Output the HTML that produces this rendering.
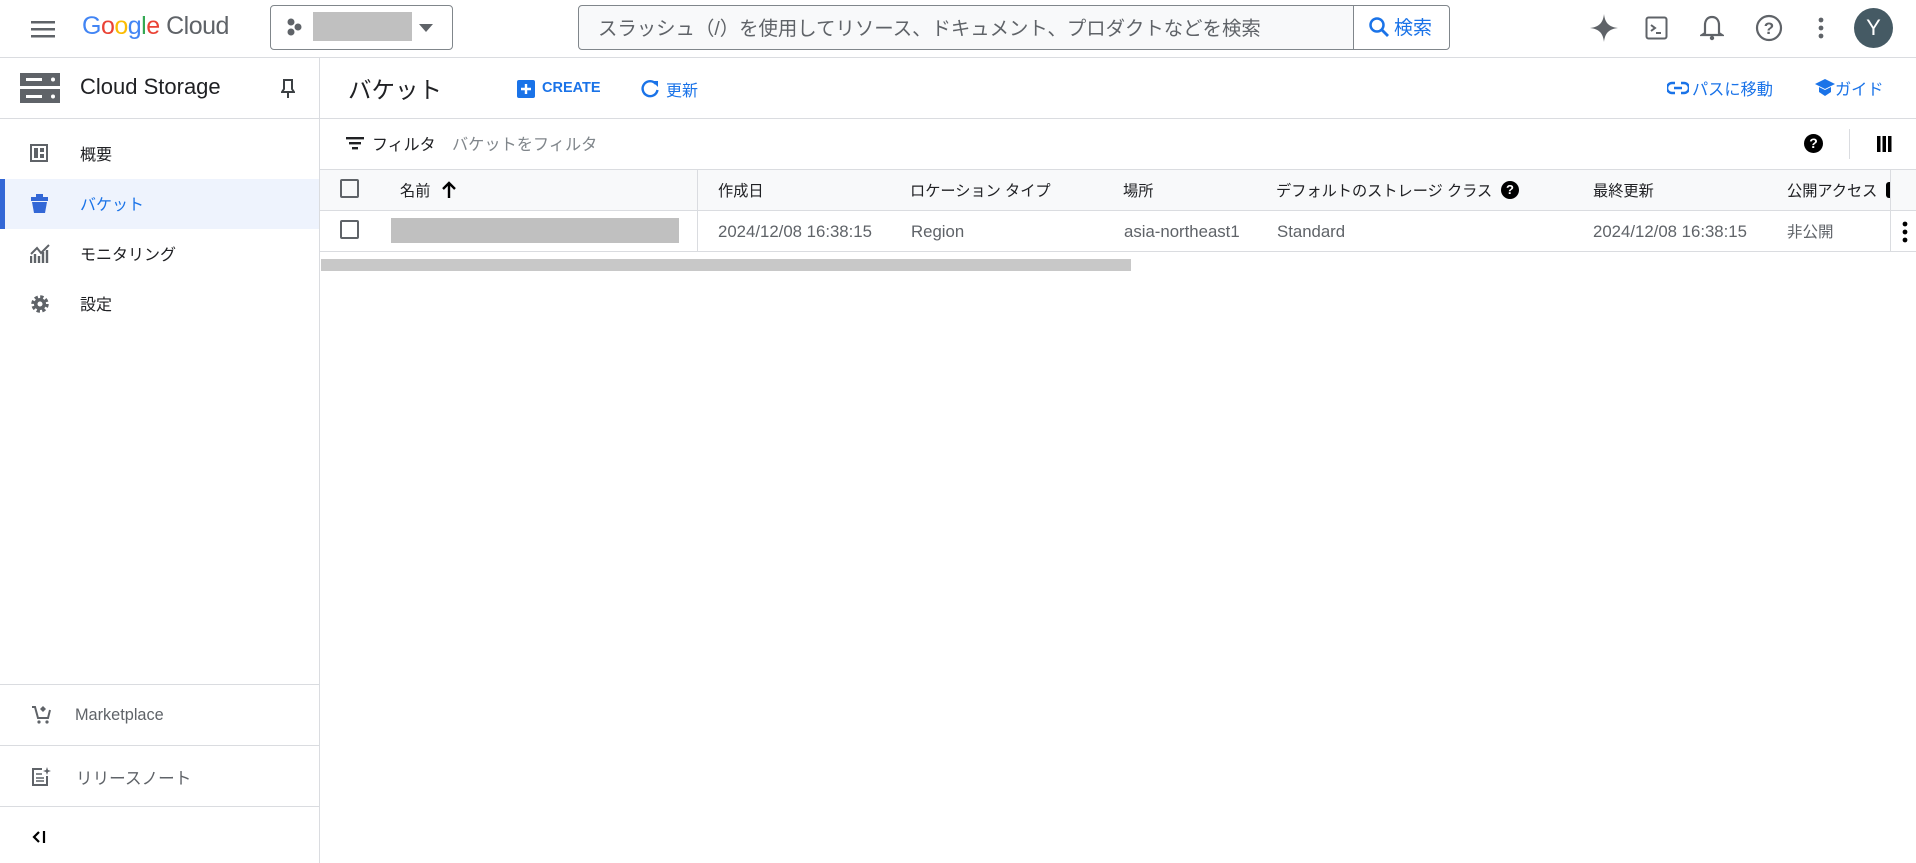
<!DOCTYPE html>
<html><head><meta charset="utf-8"><style>
*{box-sizing:border-box;margin:0;padding:0}
body{width:1916px;height:863px;overflow:hidden;background:#fff;font-family:"Liberation Sans","Noto Sans CJK JP",sans-serif;color:#202124;position:relative;font-size:16px;line-height:1.2}
.a{position:absolute;white-space:nowrap}
.hl{position:absolute;height:1px;background:#dadce0}
.vl{position:absolute;width:1px;background:#dadce0}
.blue{color:#1a73e8}
.g{color:#5f6368}
.jh{font-size:15.2px}
.lt{font-size:16.8px}
svg{display:block}
</style></head><body>
<!-- top bar -->
<div class="a" style="left:31px;top:19px"><svg width="24" height="20"><rect y="2" width="24" height="2.5" fill="#5f6368"/><rect y="9" width="24" height="2.5" fill="#5f6368"/><rect y="16" width="24" height="2.5" fill="#5f6368"/></svg></div>
<div class="a" style="left:82px;top:11px;font-size:25px;letter-spacing:-0.5px"><span style="color:#4285f4">G</span><span style="color:#ea4335">o</span><span style="color:#fbbc04">o</span><span style="color:#4285f4">g</span><span style="color:#34a853">l</span><span style="color:#ea4335">e</span> <span style="color:#5f6368">Cloud</span></div>
<div class="a" style="left:270px;top:5px;width:183px;height:45px;border:1px solid #80868b;border-radius:4px"></div>
<div class="a" style="left:286px;top:18px"><svg width="16" height="18"><circle cx="5" cy="4" r="3.5" fill="#5f6368"/><circle cx="12" cy="9" r="3.5" fill="#5f6368"/><circle cx="5" cy="14" r="3.5" fill="#5f6368"/></svg></div>
<div class="a" style="left:313px;top:12px;width:99px;height:29px;background:#c0c0c0"></div>
<div class="a" style="left:419px;top:24px;width:0;height:0;border-left:7px solid transparent;border-right:7px solid transparent;border-top:8px solid #5f6368"></div>
<div class="a" style="left:578px;top:5px;width:872px;height:45px;border:1px solid #80868b;border-radius:4px;background:#f8f9fa"></div>
<div class="a" style="left:1353px;top:6px;width:96px;height:43px;background:#fff;border-left:1px solid #80868b;border-radius:0 4px 4px 0"></div>
<div class="a g" style="left:598px;top:18px;font-size:19.4px">スラッシュ（/）を使用してリソース、ドキュメント、プロダクトなどを検索</div>
<div class="a" style="left:1368px;top:16px"><svg width="22" height="22"><circle cx="9" cy="9" r="6.5" fill="none" stroke="#1a73e8" stroke-width="2.5"/><line x1="14" y1="14" x2="20" y2="20" stroke="#1a73e8" stroke-width="2.8"/></svg></div>
<div class="a blue" style="left:1394px;top:18px;font-size:19px">検索</div>
<div class="a" style="left:1590px;top:14px"><svg width="28" height="28" viewBox="0 0 28 28"><path d="M14 0 C15 9 19 13 28 14 C19 15 15 19 14 28 C13 19 9 15 0 14 C9 13 13 9 14 0Z" fill="#5f6368"/></svg></div>
<div class="a" style="left:1645px;top:16px"><svg width="24" height="24"><rect x="1.5" y="1.5" width="20" height="21" rx="2" fill="none" stroke="#5f6368" stroke-width="2"/><path d="M6 9 L10 12 L6 15" fill="none" stroke="#5f6368" stroke-width="2"/><line x1="11" y1="17" x2="16" y2="17" stroke="#5f6368" stroke-width="2"/></svg></div>
<div class="a" style="left:1700px;top:14px"><svg width="24" height="28"><path d="M12 3 C7 3 5 7 5 11 L5 19 L2 21 L22 21 L19 19 L19 11 C19 7 17 3 12 3Z" fill="none" stroke="#5f6368" stroke-width="2.2"/><circle cx="12" cy="24" r="2.2" fill="#5f6368"/></svg></div>
<div class="a" style="left:1755px;top:14px"><svg width="28" height="28"><circle cx="14" cy="14" r="12" fill="none" stroke="#5f6368" stroke-width="2.2"/><text x="14" y="20" text-anchor="middle" font-size="17" font-family="Liberation Sans" fill="#5f6368" font-weight="bold">?</text></svg></div>
<div class="a" style="left:1817px;top:17px"><svg width="8" height="24"><circle cx="4" cy="3" r="2.4" fill="#5f6368"/><circle cx="4" cy="11" r="2.4" fill="#5f6368"/><circle cx="4" cy="19" r="2.4" fill="#5f6368"/></svg></div>
<div class="a" style="left:1854px;top:8px;width:39px;height:40px;border-radius:50%;background:#455a64;color:#fff;font-size:22px;text-align:center;line-height:40px">Y</div>
<div class="hl" style="left:0;top:57px;width:1916px"></div>
<!-- sidebar -->
<div class="vl" style="left:319px;top:57px;height:806px"></div>
<div class="a" style="left:20px;top:73px"><svg width="40" height="30"><rect width="40" height="13" fill="#5f6368"/><rect y="16" width="40" height="14" fill="#5f6368"/><rect x="6" y="5" width="16" height="3" fill="#fff"/><circle cx="33" cy="6.5" r="2" fill="#fff"/><rect x="6" y="22" width="16" height="3" fill="#fff"/><circle cx="33" cy="23.5" r="2" fill="#fff"/></svg></div>
<div class="a" style="left:80px;top:74px;font-size:22px">Cloud Storage</div>
<div class="a" style="left:281px;top:79px"><svg width="14" height="20"><path d="M3 1 H11 V10 L13 13 H1 L3 10Z M7 13 V19" fill="none" stroke="#3c4043" stroke-width="2"/></svg></div>
<div class="hl" style="left:0;top:118px;width:1916px"></div>
<div class="a" style="left:30px;top:144px"><svg width="18" height="18"><rect x="1" y="1" width="16" height="16" fill="none" stroke="#5f6368" stroke-width="2"/><rect x="4" y="4" width="4" height="10" fill="#5f6368"/><rect x="10" y="4" width="4" height="4" fill="#5f6368"/><rect x="10" y="10" width="4" height="4" fill="#5f6368"/></svg></div>
<div class="a" style="left:80px;top:146px;font-size:16px">概要</div>
<div class="a" style="left:0;top:179px;width:319px;height:50px;background:#eef3fd"></div>
<div class="a" style="left:0;top:179px;width:5px;height:50px;background:#3367d6"></div>
<div class="a" style="left:31px;top:194px"><svg width="17" height="20"><path d="M0 3 H17 V7 H0Z" fill="#3367d6"/><path d="M1 8 H16 L14 19 H3Z" fill="#3367d6"/><rect x="5" y="0" width="7" height="3" fill="#3367d6"/></svg></div>
<div class="a blue" style="left:80px;top:196px;font-size:16px">バケット</div>
<div class="a" style="left:30px;top:244px"><svg width="20" height="20"><path d="M1 19 V12 M5 19 V10 M9 19 V12 M13 19 V8 M17 19 V6" stroke="#5f6368" stroke-width="2.4"/><path d="M1 10 L7 4 L11 9 L19 1" fill="none" stroke="#5f6368" stroke-width="2"/></svg></div>
<div class="a" style="left:80px;top:246px;font-size:16px">モニタリング</div>
<div class="a" style="left:30px;top:294px"><svg width="20" height="20" viewBox="0 0 20 20"><circle cx="10" cy="10" r="6.5" fill="none" stroke="#5f6368" stroke-width="4.5" stroke-dasharray="3 2.1"/><circle cx="10" cy="10" r="6" fill="#5f6368"/><circle cx="10" cy="10" r="2.5" fill="#fff"/></svg></div>
<div class="a" style="left:80px;top:296px;font-size:16px">設定</div>
<div class="hl" style="left:0;top:684px;width:319px"></div>
<div class="a" style="left:31px;top:705px"><svg width="20" height="20"><path d="M1 2 H4 L7 13 H17 L19 5" fill="none" stroke="#5f6368" stroke-width="2"/><path d="M12 1 L15 4 L12 7 L9 4Z" fill="#5f6368"/><circle cx="8" cy="17" r="1.6" fill="#5f6368"/><circle cx="16" cy="17" r="1.6" fill="#5f6368"/></svg></div>
<div class="a g" style="left:75px;top:706px;font-size:16.3px">Marketplace</div>
<div class="hl" style="left:0;top:745px;width:319px"></div>
<div class="a" style="left:31px;top:767px"><svg width="20" height="20"><path d="M11 2 H2 V18 H16 V9" fill="none" stroke="#5f6368" stroke-width="2"/><path d="M5 7 H11 M5 11 H13 M5 14 H13" stroke="#5f6368" stroke-width="1.6"/><path d="M16 0 L17 3 L20 4 L17 5 L16 8 L15 5 L12 4 L15 3Z" fill="#5f6368"/></svg></div>
<div class="a g" style="left:76px;top:769px;font-size:16.6px">リリースノート</div>
<div class="hl" style="left:0;top:806px;width:319px"></div>
<div class="a" style="left:32px;top:830px"><svg width="14" height="14"><path d="M7 2 L2 7 L7 12" fill="none" stroke="#000" stroke-width="2.2"/><line x1="12" y1="1" x2="12" y2="13" stroke="#000" stroke-width="2.2"/></svg></div>
<!-- main header -->
<div class="a" style="left:348px;top:76px;font-size:23.5px">バケット</div>
<div class="a" style="left:517px;top:80px;width:18px;height:18px;background:#1a73e8;border-radius:2px"><svg width="18" height="18"><path d="M9 4 V14 M4 9 H14" stroke="#fff" stroke-width="2.4"/></svg></div>
<div class="a blue" style="left:542px;top:80px;font-size:14.5px;font-weight:bold">CREATE</div>
<div class="a" style="left:640px;top:79px"><svg width="20" height="20"><path d="M16 5 A7.5 7.5 0 1 0 17.5 11" fill="none" stroke="#1a73e8" stroke-width="2.4"/><path d="M12 2 H18 V8Z" fill="#1a73e8"/></svg></div>
<div class="a blue" style="left:666px;top:82px;font-size:16px">更新</div>
<div class="a" style="left:1667px;top:80px"><svg width="22" height="16"><path d="M8 3 H5 A5 5 0 0 0 5 13 H8 M14 3 H17 A5 5 0 0 1 17 13 H14 M7 8 H15" fill="none" stroke="#1a73e8" stroke-width="2.4"/></svg></div>
<div class="a blue" style="left:1692px;top:81px;font-size:16.2px">パスに移動</div>
<div class="a" style="left:1815px;top:78px"><svg width="20" height="20"><path d="M10 1 L20 6 L10 11 L0 6Z" fill="#1a73e8"/><path d="M4 9 V14 L10 18 L16 14 V9 L10 12Z" fill="#1a73e8"/></svg></div>
<div class="a blue" style="left:1835px;top:81px;font-size:16.2px">ガイド</div>
<!-- filter row -->
<div class="a" style="left:346px;top:137px"><svg width="18" height="14"><rect y="0" width="18" height="2.4" fill="#202124"/><rect x="3" y="5" width="12" height="2.4" fill="#202124"/><rect x="6" y="10" width="6" height="2.4" fill="#202124"/></svg></div>
<div class="a" style="left:372px;top:136px;font-size:16px">フィルタ</div>
<div class="a" style="left:452px;top:136px;font-size:16.2px;color:#80868b">バケットをフィルタ</div>
<div class="a" style="left:1804px;top:134px;width:19px;height:19px;border-radius:50%;background:#000;color:#fff;font-size:14px;font-weight:bold;text-align:center;line-height:19px">?</div>
<div class="vl" style="left:1849px;top:129px;height:30px"></div>
<div class="a" style="left:1877px;top:136px"><svg width="15" height="16"><rect x="0" width="3.5" height="16" fill="#000"/><rect x="5.5" width="3.5" height="16" fill="#000"/><rect x="11" width="3.5" height="16" fill="#000"/></svg></div>
<!-- table -->
<div class="hl" style="left:320px;top:169px;width:1596px"></div>
<div class="a" style="left:320px;top:170px;width:1596px;height:40px;background:#f8f9fa"></div>
<div class="hl" style="left:320px;top:210px;width:1596px"></div>
<div class="hl" style="left:320px;top:251px;width:1596px"></div>
<div class="vl" style="left:697px;top:170px;height:81px"></div>
<div class="vl" style="left:1890px;top:170px;height:81px"></div>
<div class="a" style="left:340px;top:179px;width:19px;height:19px;border:2px solid #5f6368;border-radius:2px"></div>
<div class="a" style="left:340px;top:220px;width:19px;height:19px;border:2px solid #5f6368;border-radius:2px"></div>
<div class="a jh" style="left:400px;top:183px">名前</div>
<div class="a" style="left:442px;top:181px"><svg width="14" height="18"><path d="M7 17 V2 M1 8 L7 2 L13 8" fill="none" stroke="#000" stroke-width="2.4"/></svg></div>
<div class="a" style="left:391px;top:218px;width:288px;height:25px;background:#c0c0c0"></div>
<div class="a jh" style="left:718px;top:183px">作成日</div>
<div class="a jh" style="left:910px;top:183px">ロケーション タイプ</div>
<div class="a jh" style="left:1123px;top:183px">場所</div>
<div class="a jh" style="left:1276px;top:183px">デフォルトのストレージ クラス</div>
<div class="a" style="left:1501px;top:181px;width:18px;height:18px;border-radius:50%;background:#000;color:#fff;font-size:13px;font-weight:bold;text-align:center;line-height:18px">?</div>
<div class="a jh" style="left:1593px;top:183px">最終更新</div>
<div class="a jh" style="left:1787px;top:183px">公開アクセス</div>
<div class="a" style="left:1886px;top:182px;width:4px;height:16px;background:#000;border-radius:3px 0 0 3px"></div>
<div class="a g lt" style="left:718px;top:222px">2024/12/08 16:38:15</div>
<div class="a g lt" style="left:911px;top:222px">Region</div>
<div class="a g lt" style="left:1124px;top:222px">asia-northeast1</div>
<div class="a g lt" style="left:1277px;top:222px">Standard</div>
<div class="a g lt" style="left:1593px;top:222px">2024/12/08 16:38:15</div>
<div class="a g jh" style="left:1787px;top:224px;font-size:15.5px">非公開</div>
<div class="a" style="left:1901px;top:221px"><svg width="8" height="22"><circle cx="4" cy="3" r="2.4" fill="#000"/><circle cx="4" cy="11" r="2.4" fill="#000"/><circle cx="4" cy="19" r="2.4" fill="#000"/></svg></div>
<div class="a" style="left:321px;top:259px;width:810px;height:12px;background:#c8c8c8"></div>
</body></html>
